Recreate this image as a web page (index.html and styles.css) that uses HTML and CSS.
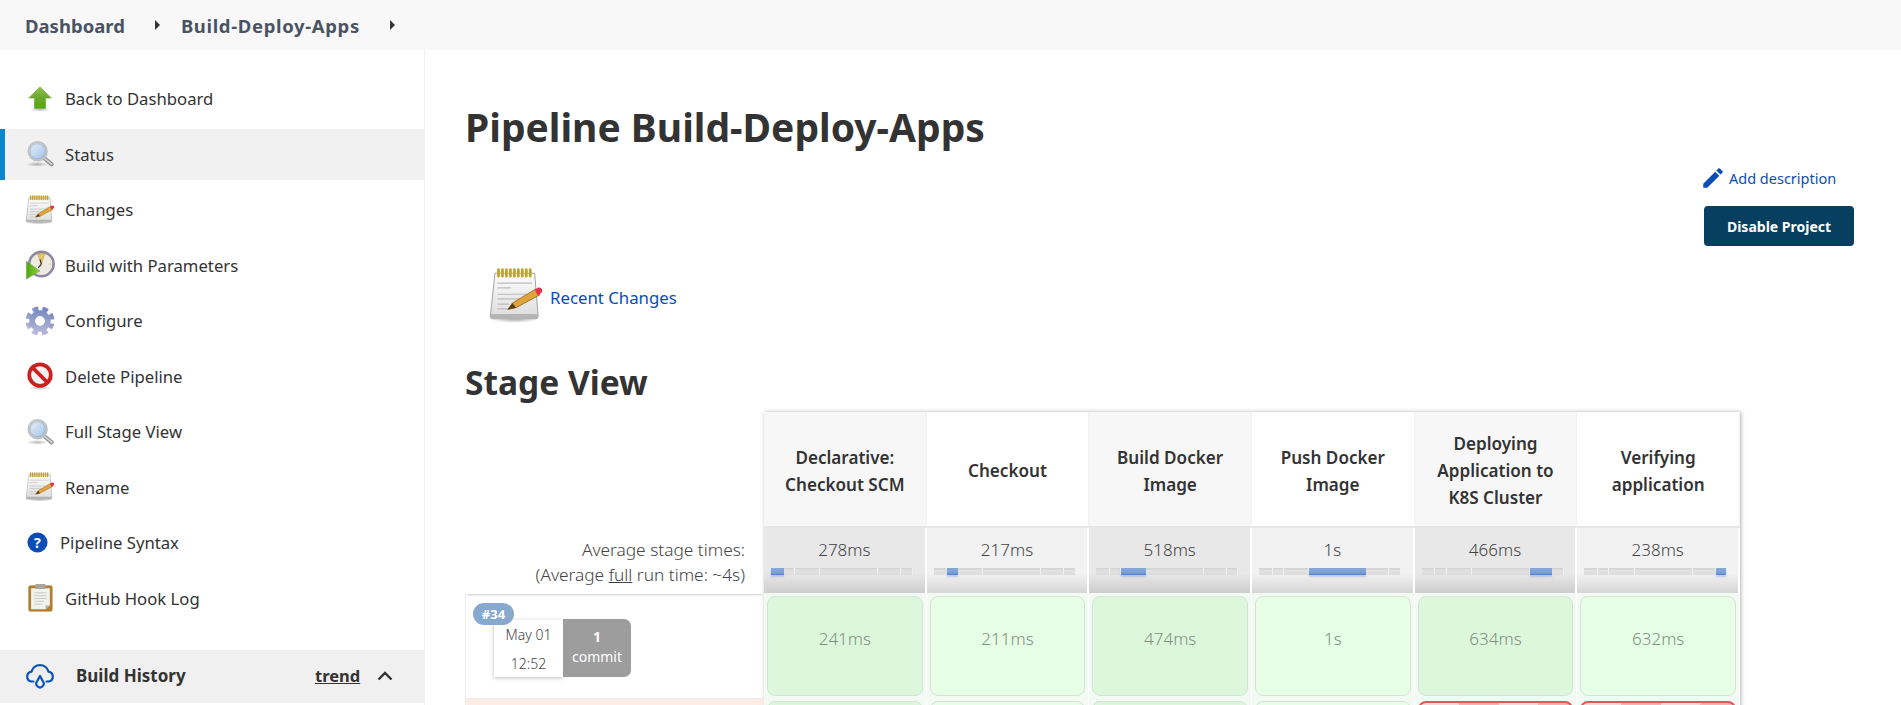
FILE: index.html
```html
<!DOCTYPE html>
<html lang="en">
<head>
<meta charset="utf-8">
<title>Build-Deploy-Apps</title>
<link rel="stylesheet" href="styles.css">
</head>
<body>
<svg class="defs" aria-hidden="true">
  <defs>
    <linearGradient id="gGreen" x1="0" y1="0" x2="0" y2="1"><stop offset="0" stop-color="#8cc152"/><stop offset=".55" stop-color="#6aa52c"/><stop offset="1" stop-color="#4fae08"/></linearGradient>
    <linearGradient id="gPaper" x1="0" y1="0" x2="0" y2="1"><stop offset="0" stop-color="#fdfdfd"/><stop offset="1" stop-color="#dcdcdc"/></linearGradient>
    <linearGradient id="gLens" x1="0" y1="0" x2="1" y2="1"><stop offset="0" stop-color="#eef4fb"/><stop offset="1" stop-color="#9dbde6"/></linearGradient>
    <linearGradient id="gGear" gradientUnits="userSpaceOnUse" x1="0" y1="2" x2="0" y2="30"><stop offset="0" stop-color="#7488bd"/><stop offset="1" stop-color="#b9b9da"/></linearGradient>
    <linearGradient id="gPlay" x1="0" y1="0" x2="1" y2="0"><stop offset="0" stop-color="#4ea50f"/><stop offset="1" stop-color="#8bd63a"/></linearGradient>
    <radialGradient id="gShadow"><stop offset="0" stop-color="#000" stop-opacity=".28"/><stop offset="1" stop-color="#000" stop-opacity="0"/></radialGradient>
    <symbol id="i-arrow" viewBox="0 0 32 32">
      <ellipse cx="16" cy="27" rx="11" ry="2.5" fill="url(#gShadow)"/>
      <path d="M16 3 L28 15 H22 V26 H10 V15 H4 Z" fill="url(#gGreen)" stroke="#6f9f3a" stroke-width=".6"/>
    </symbol>
    <symbol id="i-search" viewBox="0 0 32 32">
      <ellipse cx="13" cy="27" rx="12" ry="2.6" fill="url(#gShadow)"/>
      <path d="M20 20 L28.5 27" stroke="#8a8a8a" stroke-width="4.4" stroke-linecap="round"/>
      <path d="M20 20 L28.5 27" stroke="#cfcfcf" stroke-width="2.2" stroke-linecap="round"/>
      <circle cx="13.5" cy="13" r="9.8" fill="url(#gLens)" stroke="#c2c2c2" stroke-width="2.2"/>
      <circle cx="13.5" cy="13" r="8" fill="none" stroke="#8da3c0" stroke-width=".6"/>
    </symbol>
    <symbol id="i-notepad" viewBox="0 0 48 48">
      <ellipse cx="23" cy="44.5" rx="20" ry="2.5" fill="url(#gShadow)"/>
      <path d="M6 4.5 H40 L43 41 Q43 43.500 41 43.500 H4 Q2 43.500 2 41 Z" fill="url(#gPaper)" stroke="#8f8f8f" stroke-width=".7"/>
      <path d="M2.200 39.500 H42.800 V41.500 Q42.800 43.300 41 43.300 H4 Q2.200 43.300 2.200 41.500 Z" fill="#b5b5b5"/>
      <path d="M9 1.500 V7 M12.400 1.500 V7 M15.800 1.500 V7 M19.200 1.500 V7 M22.600 1.500 V7 M26 1.500 V7 M29.400 1.500 V7 M32.800 1.500 V7 M36.200 1.500 V7" stroke="#c2a32a" stroke-width="2.4" stroke-linecap="round"/>
      <path d="M8 13 H38 M8 17 H20 M8 22.500 H38 M8 26.500 H38 M8 31 H18 M8 35 H18" stroke="#bcbcbc" stroke-width="1"/>
      <path d="M17 35.500 L21 30 L41 18 L44.500 23 L24 34 Z" fill="#e0a43a" stroke="#8f6516" stroke-width=".7"/>
      <path d="M40 18.600 L43 16.800 Q45.500 16.300 46.500 18.600 Q47 20.500 45 21.800 L42.800 23.500 Z" fill="#e8304a"/>
      <path d="M17 35.500 L21 30 L24 34 Z" fill="#5a3d10"/>
    </symbol>
    <symbol id="i-clock" viewBox="0 0 32 32">
      <circle cx="17.500" cy="15" r="13" fill="#efeae0" stroke="#8d88a3" stroke-width="2.800"/>
      <path d="M17.500 15 L13.500 4.500 Q17.500 2.500 21 4 Z" fill="#e6c766" stroke="#a98c2c" stroke-width=".5"/>
      <path d="M17.500 15 L16 10 M17.500 15 L14 19" stroke="#333" stroke-width="1.300" fill="none"/>
      <circle cx="27" cy="15" r=".8" fill="#bbb"/>
      <path d="M1.500 12 L16 22.500 L1.500 31 Z" fill="url(#gPlay)" stroke="#7e9a64" stroke-width=".6"/>
    </symbol>
    <symbol id="i-gear" viewBox="0 0 32 32">
      <circle cx="16" cy="16" r="12.800" fill="none" stroke="url(#gGear)" stroke-width="5.400" stroke-dasharray="6 4.050" stroke-dashoffset="3" transform="rotate(22.500 16 16)"/>
      <circle cx="16" cy="16" r="8.200" fill="none" stroke="url(#gGear)" stroke-width="6.400"/>
      <circle cx="16" cy="16" r="5" fill="#fff"/>
    </symbol>
    <symbol id="i-stop" viewBox="0 0 32 32">
      <ellipse cx="16" cy="28.500" rx="12" ry="2.500" fill="url(#gShadow)"/>
      <circle cx="16" cy="15" r="11.500" fill="#f2f2f2" stroke="#cc1f1f" stroke-width="4"/>
      <path d="M7.500 6.500 L24.500 23.500" stroke="#cc1f1f" stroke-width="4"/>
    </symbol>
    <symbol id="i-clip" viewBox="0 0 32 32">
      <rect x="4" y="3" width="25" height="27" rx="1.500" fill="#b5812f" stroke="#9a6c22" stroke-width=".6"/>
      <path d="M6.500 5.500 H26.500 V24 L22 28 H6.500 Z" fill="#f1f1ed"/>
      <path d="M22 28 L26.500 24 H22 Z" fill="#a9a9a9"/>
      <rect x="11" y="1" width="11" height="5.500" rx="1" fill="#a8a79b"/>
      <path d="M10 10.500 H23 M10 13.500 H23 M10 16.500 H23 M10 19.500 H20 M10 22.500 H18" stroke="#c9c9c4" stroke-width="1"/>
    </symbol>
  </defs>
</svg>

<header class="crumbs">
  <a class="crumb">Dashboard</a>
  <span class="crumb-arrow"></span>
  <a class="crumb crumb-job">Build-Deploy-Apps</a>
  <span class="crumb-arrow"></span>
</header>

<div class="layout">
  <aside class="side">
    <nav class="tasks">
      <a class="task"><svg class="task-icon"><use href="#i-arrow"/></svg>Back to Dashboard</a>
      <a class="task is-active"><svg class="task-icon"><use href="#i-search"/></svg>Status</a>
      <a class="task"><svg class="task-icon"><use href="#i-notepad"/></svg>Changes</a>
      <a class="task"><svg class="task-icon"><use href="#i-clock"/></svg>Build with Parameters</a>
      <a class="task"><svg class="task-icon"><use href="#i-gear"/></svg>Configure</a>
      <a class="task"><svg class="task-icon"><use href="#i-stop"/></svg>Delete Pipeline</a>
      <a class="task"><svg class="task-icon"><use href="#i-search"/></svg>Full Stage View</a>
      <a class="task"><svg class="task-icon"><use href="#i-notepad"/></svg>Rename</a>
      <a class="task task-help"><svg class="help-icon" viewBox="0 0 22 22"><circle cx="11" cy="11" r="10.500" fill="#0b4db5"/><text x="11" y="16.500" class="help-mark">?</text></svg>Pipeline Syntax</a>
      <a class="task"><svg class="task-icon"><use href="#i-clip"/></svg>GitHub Hook Log</a>
    </nav>
    <div class="history">
      <svg class="cloud" viewBox="0 0 30 28" fill="none" stroke="#0b52b8" stroke-width="2.200" stroke-linecap="round" stroke-linejoin="round"><path d="M8.500 20.500 H6.500 A5 5 0 0 1 6.500 10.600 A8.800 8.800 0 0 1 23.500 10.600 A5 5 0 0 1 23.500 20.500 H21.500"/><path d="M15 15 L18.200 20.800 A3.700 3.700 0 1 1 11.800 20.800 Z"/></svg>
      <span class="history-title">Build History</span>
      <a class="trend">trend</a>
      <svg class="chev" viewBox="0 0 16 10" fill="none" stroke="#333" stroke-width="2.400"><path d="M1.500 8.500 L8 2 L14.500 8.500"/></svg>
    </div>
  </aside>

  <main class="main">
    <h1 class="title">Pipeline Build-Deploy-Apps</h1>
    <div class="actions">
      <a class="add-desc"><svg class="pen" viewBox="0 0 24 24"><path fill="#0b4db5" d="M3 17.250V21h3.750L17.810 9.940l-3.750-3.750L3 17.250zM20.710 7.040a1 1 0 0 0 0-1.410l-2.340-2.340a1 1 0 0 0-1.410 0l-1.830 1.830 3.750 3.750 1.830-1.830z"/></svg>Add description</a>
      <button class="disable">Disable Project</button>
    </div>
    <div class="recent">
      <svg class="recent-icon"><use href="#i-notepad"/></svg>
      <a class="recent-link">Recent Changes</a>
    </div>
    <h2 class="subtitle">Stage View</h2>

    <div class="view">
      <div class="labels">
        <div class="label-head"></div>
        <div class="label-avg">
          <div>Average stage times:</div>
          <div>(Average <u>full</u> run time: ~4s)</div>
        </div>
        <div class="run">
          <span class="badge">#34</span>
          <div class="date"><span>May 01</span><span>12:52</span></div>
          <div class="commit"><b>1</b><span>commit</span></div>
        </div>
        <div class="run run-failed"></div>
      </div>

      <div class="stages">
        <div class="head odd">Declarative: Checkout SCM</div>
        <div class="head">Checkout</div>
        <div class="head odd">Build Docker Image</div>
        <div class="head">Push Docker Image</div>
        <div class="head odd">Deploying Application to K8S Cluster</div>
        <div class="head">Verifying application</div>

        <div class="avg odd">278ms<div class="bar"><i class="seg on" style="flex:13"></i><i class="seg" style="flex:11"></i><i class="seg" style="flex:25"></i><i class="seg" style="flex:59"></i><i class="seg" style="flex:23"></i><i class="seg" style="flex:11"></i></div></div>
        <div class="avg">217ms<div class="bar"><i class="seg" style="flex:13"></i><i class="seg on" style="flex:11"></i><i class="seg" style="flex:25"></i><i class="seg" style="flex:59"></i><i class="seg" style="flex:23"></i><i class="seg" style="flex:11"></i></div></div>
        <div class="avg odd">518ms<div class="bar"><i class="seg" style="flex:13"></i><i class="seg" style="flex:11"></i><i class="seg on" style="flex:25"></i><i class="seg" style="flex:59"></i><i class="seg" style="flex:23"></i><i class="seg" style="flex:11"></i></div></div>
        <div class="avg">1s<div class="bar"><i class="seg" style="flex:13"></i><i class="seg" style="flex:11"></i><i class="seg" style="flex:25"></i><i class="seg on" style="flex:59"></i><i class="seg" style="flex:23"></i><i class="seg" style="flex:11"></i></div></div>
        <div class="avg odd">466ms<div class="bar"><i class="seg" style="flex:13"></i><i class="seg" style="flex:11"></i><i class="seg" style="flex:25"></i><i class="seg" style="flex:59"></i><i class="seg on" style="flex:23"></i><i class="seg" style="flex:11"></i></div></div>
        <div class="avg">238ms<div class="bar"><i class="seg" style="flex:13"></i><i class="seg" style="flex:11"></i><i class="seg" style="flex:25"></i><i class="seg" style="flex:59"></i><i class="seg" style="flex:23"></i><i class="seg on" style="flex:11"></i></div></div>

        <div class="cell"><div class="card odd">241ms</div></div>
        <div class="cell"><div class="card">211ms</div></div>
        <div class="cell"><div class="card odd">474ms</div></div>
        <div class="cell"><div class="card">1s</div></div>
        <div class="cell"><div class="card odd">634ms</div></div>
        <div class="cell"><div class="card">632ms</div></div>

        <div class="cell"><div class="card odd"></div></div>
        <div class="cell"><div class="card"></div></div>
        <div class="cell"><div class="card odd"></div></div>
        <div class="cell"><div class="card"></div></div>
        <div class="cell"><div class="card failed"></div></div>
        <div class="cell"><div class="card failed"></div></div>
      </div>
    </div>
  </main>
</div>
</body>
</html>
```
FILE: styles.css
```css
* { box-sizing: border-box; }
html, body { margin: 0; height: 705px; overflow: hidden; background: #fff; }
body { font-family: "Noto Sans", "Open Sans", sans-serif; font-size: 15px; color: #333; }
.defs { position: absolute; width: 0; height: 0; }

.crumbs { height: 50px; background: #f8f8f8; display: flex; align-items: center; padding-left: 25px; }
.crumb { font-size: 18.500px; font-weight: 700; color: #4a5361; }
.crumb-job { letter-spacing: .65px; }
.crumb-arrow { width: 0; height: 0; border-left: 5px solid #333; border-top: 5px solid transparent; border-bottom: 5px solid transparent; margin: 0 21px 0 30px; }

.layout { display: grid; grid-template-columns: 425px 1fr; height: 655px; overflow: hidden; }
.side { border-right: 1px solid #f0f0f0; padding-top: 23px; display: flex; flex-direction: column; }
.tasks { display: flex; flex-direction: column; gap: 4.500px; }
.task { height: 51px; display: flex; align-items: center; padding-left: 25px; gap: 10px; font-size: 16.700px; color: #333; }
.task.is-active { background: #f1f1f1; box-shadow: inset 5px 0 0 #0a85d0; }
.task-icon { width: 30px; height: 30px; flex: none; }
.task-help { padding-left: 27px; gap: 12px; }
.help-icon { width: 21px; height: 21px; flex: none; }
.help-mark { font-family: "Noto Sans", sans-serif; font-size: 15px; font-weight: 700; fill: #fff; text-anchor: middle; }

.history { margin-top: 26px; height: 53px; background: #f0f0f0; display: flex; align-items: center; padding: 0 0 2px 25px; }
.cloud { width: 30px; height: 28px; flex: none; }
.history-title { margin-left: 21px; font-size: 17px; font-weight: 700; width: 239px; }
.trend { font-size: 16.500px; font-weight: 700; text-decoration: underline; }
.chev { width: 16px; height: 10px; margin: 2px 0 0 17px; }

.main { padding-left: 40px; min-width: 0; }
.title { margin: 55px 0 0; font-size: 39px; line-height: 44px; font-weight: 700; color: #333; }
.actions { margin-top: 19px; padding-right: 47px; display: flex; flex-direction: column; align-items: flex-end; }
.add-desc { width: 150px; height: 20px; display: flex; align-items: center; gap: 3px; font-size: 14.500px; color: #0b4db5; }
.pen { width: 26px; height: 26px; flex: none; margin-left: -4px; }
.disable { margin-top: 18px; width: 150px; height: 40px; border: 0; border-radius: 4px; background: #063f60; color: #fff; font: 700 14px "Noto Sans", sans-serif; padding: 0; }
.recent { margin: 22px 0 0 23px; height: 56px; display: flex; align-items: center; gap: 6px; }
.recent-icon { width: 56px; height: 56px; flex: none; }
.recent-link { font-size: 16.800px; color: #0b4db5; position: relative; top: 1px; }
.subtitle { margin: 38px 0 0; font-size: 33.500px; line-height: 40px; font-weight: 700; color: #333; }

.view { display: flex; margin: 10px 0 0; }
.labels { width: 299px; flex: none; }
.label-head { height: 116px; }
.label-avg { height: 66px; text-align: right; padding: 9px 19px 0 0; font-size: 17.300px; line-height: 25px; font-weight: 300; color: #444; box-shadow: 0 3px 2px -2px rgba(0,0,0,.2); }
.run { height: 105px; position: relative; border: 1px solid #ececec; border-top: 0; display: flex; padding: 26px 0 0 28px; }
.run-failed { background: #fdebe6; }
.badge { position: absolute; left: 7px; top: 9px; width: 41px; height: 22px; border-radius: 11px; background: #87a9cf; color: #fff; font-size: 13px; font-weight: 700; text-align: center; line-height: 22px; z-index: 1; }
.date { width: 69px; height: 57px; display: flex; flex-direction: column; align-items: center; justify-content: space-between; padding: 6px 0 4px; background: #fff; box-shadow: 0 1px 4px rgba(0,0,0,.25); font-size: 14px; line-height: 18px; font-weight: 300; color: #444; }
.commit { width: 68px; height: 58px; margin-top: -1px; border-radius: 0 7px 7px 0; background: #9d9d9d; color: #fff; display: flex; flex-direction: column; align-items: center; font-size: 14px; line-height: 20px; padding-top: 8px; }

.stages { width: 976px; display: grid; grid-template-columns: repeat(6, 1fr); grid-template-rows: 116px 65px 105px 105px; box-shadow: 1px 0 4px rgba(0,0,0,.3); background: #fff; }
.head { display: flex; align-items: center; justify-content: center; text-align: center; padding: 3px 18px 0; font-size: 17.100px; line-height: 27px; font-weight: 600; color: #333; background: #fff; border-bottom: 2px solid #e6e6e6; border-right: 1px solid #f2f2f2; }
.head.odd { background: #f7f7f7; }
.avg { padding-top: 11px; text-align: center; font-size: 17px; line-height: 22px; font-weight: 300; color: #444; background: linear-gradient(#f2f2f2 70%, #d6d6d6); border-right: 2px solid #fff; }
.avg.odd { background: linear-gradient(#e8e8e8 70%, #cdcdcd); }
.bar { margin: 7px 0 0 7px; width: 142px; height: 7px; display: flex; background: #e4e4e4; }
.seg { display: block; background: linear-gradient(#d0d0d0, #e2e2e2 40%, #dcdcdc); border-right: 1px solid #f0f0f0; min-width: 0; }
.seg.on { background: linear-gradient(#85a8d8, #7aa0d6 70%, #4f7fd0); border-right: 0; box-shadow: 0 2px 2px rgba(80,120,200,.3); }
.cell { padding: 3px 3px 2px; background: #f3f9f3; border-right: 1px solid #fff; }
.card { height: 100%; border: 1px solid #d3e4d3; border-radius: 8px; background: #e6ffe6; display: flex; align-items: center; justify-content: center; padding-bottom: 16px; font-size: 17px; font-weight: 300; color: #7f8f7f; }
.card.odd { background: #ddf7dd; }
.card.failed { border: 2px solid #e8565b; background: repeating-linear-gradient(115deg, #fbdcdc 0 36px, #f6b5b5 36px 72px); }
```
